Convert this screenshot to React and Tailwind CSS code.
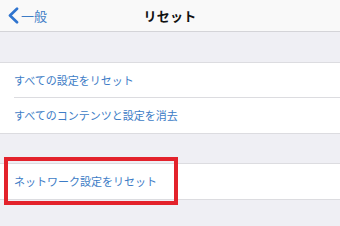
import React from "react";

const font = { fontFamily: '"Noto Sans CJK JP", "Noto Sans", sans-serif' };

function Row({ label, divider }) {
  return (
    <div className="bg-white pl-[14px]">
      <div className={`h-[35px] flex items-center text-[11px] text-[#3d7cc6] ${divider ? "border-b border-[#dcdce0]" : ""}`}>
        {label}
      </div>
    </div>
  );
}

export default function App() {
  return (
    <div className="w-[340px] h-[226px] bg-[#efeff4] overflow-hidden" style={font}>
      {/* NAV */}
      <div className="h-[32px] bg-[#f9f9f9] border-b border-[#d4d4d8] grid grid-cols-[1fr_auto_1fr] items-center">
        <div className="flex items-center pl-[7px] text-[#3d7cc6]">
          <svg width="12" height="17" viewBox="0 0 12 17" fill="none">
            <path d="M10 1.8 L3 8.5 L10 15.2" stroke="#2f74cf" strokeWidth="2.7" strokeLinecap="round" strokeLinejoin="round" />
          </svg>
          <span className="ml-[2px] text-[13px] leading-none">一般</span>
        </div>
        <div className="text-[13px] font-bold tracking-[0.3px] text-[#111]">リセット</div>
        <div />
      </div>

      <div className="h-[30px]" />

      {/* GROUP 1 */}
      <div className="border-y border-[#dcdce0]">
        <Row label="すべての設定をリセット" divider />
        <Row label="すべてのコンテンツと設定を消去" />
      </div>

      <div className="h-[29px]" />

      {/* GROUP 2 */}
      <div className="relative border-y border-[#dcdce0]">
        <Row label="ネットワーク設定をリセット" />
        <div className="absolute left-[4px] top-[-7px] w-[174px] h-[48px] border-[4.5px] border-[#e3222b]" />
      </div>
    </div>
  );
}
